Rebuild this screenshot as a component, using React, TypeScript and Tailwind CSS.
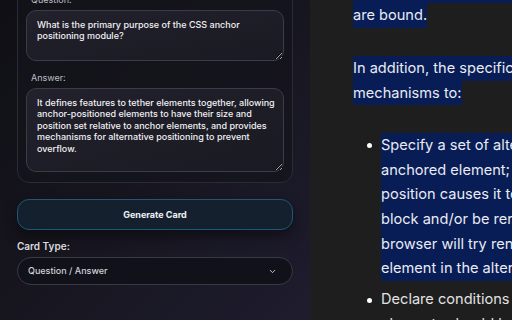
import { ChevronDown } from "lucide-react";

const font = { fontFamily: "Inter, 'Noto Sans', sans-serif" };

function Sel({ children }: { children: string }) {
  return <div className="w-fit whitespace-nowrap bg-[#081c56] text-[#e9ebf3]">{children}</div>;
}

export default function App() {
  const item1 = [
    "Specify a set of alternative positions for an",
    "anchored element; when the default",
    "position causes it to overflow its containing",
    "block and/or be rendered off-screen, the",
    "browser will try rendering the anchor-positioned",
    "element in the alternative positions instead.",
  ];

  return (
    <div className="flex h-[320px] w-[512px] overflow-hidden" style={font}>
      <aside className="flex w-[310px] shrink-0 flex-col bg-linear-to-br from-[#0f0f15] via-[#17161f] to-[#1e1c2e] px-[17px]">
        <div className="-mt-[27px] rounded-[12px] border border-[#2b2b37] bg-[#14141b]/70 px-[8px] pt-[20px] pb-[10px]">
          <label className="block pl-[5px] text-[9px] leading-[12px] text-[#bdbdc6]">Question:</label>
          <textarea
            readOnly
            className="mt-[4px] block h-[51px] w-full rounded-[10px] border border-[#3c3b49] bg-linear-to-br from-[#22212c] to-[#1a1a22] pt-[8px] pr-[5px] pl-[10px] text-[9px] leading-[11.4px] font-medium text-[#f0f0f3] outline-none"
            style={font}
            defaultValue="What is the primary purpose of the CSS anchor positioning module?"
          />
          <label className="mt-[11px] block pl-[5px] text-[9px] leading-[12px] text-[#bdbdc6]">Answer:</label>
          <textarea
            readOnly
            className="mt-[4px] block h-[84px] w-full rounded-[10px] border border-[#3c3b49] bg-linear-to-br from-[#22212c] to-[#1a1a22] pt-[8px] pr-[5px] pl-[10px] text-[9px] leading-[11.4px] font-medium text-[#f0f0f3] outline-none"
            style={font}
            defaultValue="It defines features to tether elements together, allowing anchor-positioned elements to have their size and position set relative to anchor elements, and provides mechanisms for alternative positioning to prevent overflow."
          />
        </div>

        <button className="mt-[16px] h-[31px] w-full rounded-[12px] border border-[#1d5877] bg-[#15202e] text-[9px] font-bold text-[#eef0f4] shadow-[0_6px_14px_rgba(0,0,0,0.45)]">
          Generate Card
        </button>

        <div className="mt-[10px] text-[10px] leading-[12px] font-semibold text-[#d9d9de]">Card Type:</div>
        <div className="mt-[5px] flex h-[28px] items-center justify-between rounded-[14px] border border-[#393943] bg-[#111119] pr-[15px] pl-[10px]">
          <span className="text-[9px] font-medium text-[#d2d2d8]">Question / Answer</span>
          <ChevronDown size={9} strokeWidth={2.5} className="text-[#d0d0d6]" />
        </div>
      </aside>

      <main className="flex-1 overflow-hidden bg-[#1e1e1e] pl-[43px] text-[14.6px] leading-[24.6px] text-[#e2e2e2]">
        <div className="-mt-[21.6px]">
          <Sel>location of the anchor elements to which they</Sel>
          <Sel>are bound.</Sel>
        </div>
        <div className="mt-[28.4px]">
          <Sel>In addition, the specification provides CSS-only</Sel>
          <Sel>mechanisms to:</Sel>
        </div>
        <div className="mt-[28.1px] flex">
          <span className="mt-[10.2px] ml-[14px] mr-[9px] h-[5px] w-[5px] shrink-0 rounded-full bg-white" />
          <div>
            {item1.map((l) => (
              <Sel key={l}>{l}</Sel>
            ))}
          </div>
        </div>
        <div className="mt-[6.6px] flex">
          <span className="mt-[10.2px] ml-[14px] mr-[9px] h-[5px] w-[5px] shrink-0 rounded-full bg-white" />
          <div className="whitespace-nowrap">
            <div>Declare conditions under which anchor-positioned</div>
            <div>elements should be hidden.</div>
          </div>
        </div>
      </main>
    </div>
  );
}
